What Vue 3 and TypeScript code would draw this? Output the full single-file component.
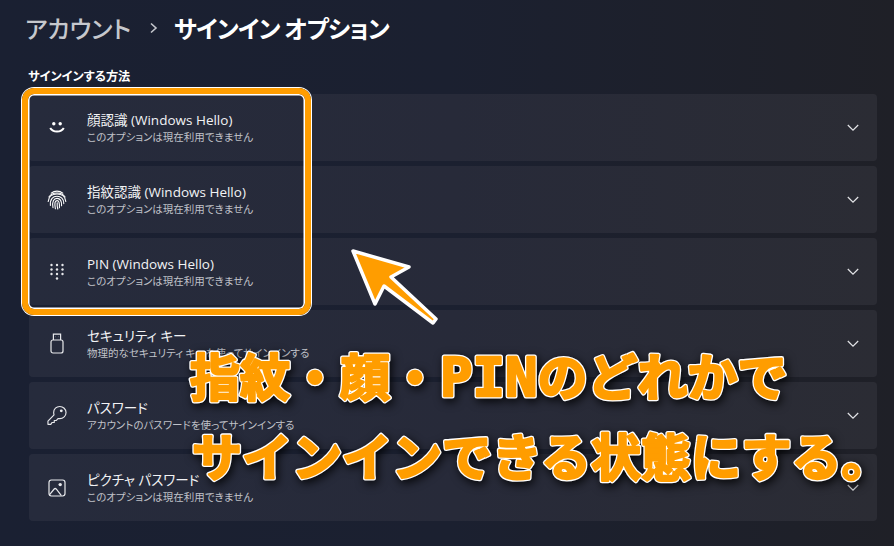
<script setup lang="ts">
interface Row {
  id: string;
  title: string;
  desc: string;
}

const unavailable = 'このオプションは現在利用できません';

const rows: Row[] = [
  { id: 'face', title: '顔認識 (Windows Hello)', desc: unavailable },
  { id: 'finger', title: '指紋認識 (Windows Hello)', desc: unavailable },
  { id: 'pin', title: 'PIN (Windows Hello)', desc: unavailable },
  { id: 'key', title: 'セキュリティ キー', desc: '物理的なセキュリティ キーを使ってサインインする' },
  { id: 'password', title: 'パスワード', desc: 'アカウントのパスワードを使ってサインインする' },
  { id: 'picture', title: 'ピクチャ パスワード', desc: unavailable },
];

const pinDots = [
  [1.5, 2], [7, 2], [12.5, 2],
  [1.5, 6.5], [7, 6.5], [12.5, 6.5],
  [1.5, 11], [7, 11], [12.5, 11],
  [7, 15.5],
];
</script>

<template>
  <div class="page">
    <header class="crumbs">
      <span class="parent">アカウント</span>
      <svg class="sep" width="10" height="12" viewBox="0 0 10 12">
        <path d="M2 1.5 L7 6 L2 10.5" fill="none" stroke="#c4c6cc" stroke-width="1.6" />
      </svg>
      <span class="current">サインイン オプション</span>
    </header>

    <h2 class="section">サインインする方法</h2>

    <div class="list">
      <div v-for="row in rows" :key="row.id" class="row">
        <div class="icon">
          <svg v-if="row.id === 'face'" width="20" height="20" viewBox="0 0 20 20" fill="none">
            <circle cx="6.8" cy="5.8" r="1.7" fill="#fff" />
            <circle cx="13.2" cy="5.8" r="1.7" fill="#fff" />
            <path d="M3.2 10 C6 14.8 14 14.8 16.8 10" stroke="#fff" stroke-width="2" />
          </svg>
          <svg v-else-if="row.id === 'finger'" width="20" height="20" viewBox="0 0 20 20" fill="none" stroke="#fff" stroke-width="1.1" stroke-linecap="round">
            <path d="M4.2 3.2 C7.6 0.4 12.4 0.4 15.8 3.2" />
            <path d="M1.9 7 C5.2 1.6 14.8 1.6 18.1 7" />
            <path d="M1.2 11.5 C1.6 6.4 5.6 4 10 4 C14.4 4 18.4 6.4 18.8 11.5" />
            <path d="M3.4 15.4 C2.8 8.8 6.2 6.2 10 6.2 C13.8 6.2 17 8.8 16.8 13.6" />
            <path d="M6 17.6 C4.8 11.4 6.8 8.4 10 8.4 C13 8.4 14.8 10.6 14.6 15.8" />
            <path d="M8.4 18.8 C7.2 13.4 8 10.6 10 10.6 C12 10.6 12.6 12.8 12.4 17.8" />
            <path d="M10.2 12.8 C10 15 10.2 17 10.8 19" />
          </svg>
          <svg v-else-if="row.id === 'pin'" width="14" height="18" viewBox="0 0 14 18">
            <circle v-for="(d, i) in pinDots" :key="i" :cx="d[0]" :cy="d[1]" r="1.2" fill="#e8e9ec" />
          </svg>
          <svg v-else-if="row.id === 'key'" width="14" height="21" viewBox="0 0 14 21" fill="none" stroke="#e8e9ec" stroke-width="1.2">
            <rect x="1" y="7" width="12" height="13" rx="2" />
            <path d="M3.4 7 V1.2 H10.6 V7" />
            <path d="M5.4 3.6 H5.6 M8.4 3.6 H8.6" />
          </svg>
          <svg v-else-if="row.id === 'password'" width="21" height="21" viewBox="0 0 21 21" fill="none" stroke="#e8e9ec" stroke-width="1.2" stroke-linejoin="round">
            <path d="M13.4 1 C17 1 20 3.8 20 7.4 C20 11 17 13.8 13.4 13.8 L11.8 13.6 L9.6 15.8 H7.6 V17.8 H5.4 L4 19.8 H1 V16.4 L7.4 9.8 C7.1 9 7 8.2 7 7.4 C7 3.8 9.8 1 13.4 1 Z" />
            <circle cx="15" cy="5.6" r="1.5" fill="#e8e9ec" stroke="none" />
          </svg>
          <svg v-else width="18" height="18" viewBox="0 0 18 18" fill="none" stroke="#e8e9ec" stroke-width="1.2">
            <rect x="1" y="1" width="16" height="16" rx="2.4" />
            <path d="M1.4 15.8 L6.2 10 C6.8 9.4 7.6 9.4 8.2 10 L13.4 16.6" />
            <circle cx="12.2" cy="5.6" r="1.7" fill="#e8e9ec" stroke="none" />
          </svg>
        </div>
        <div class="text">
          <div class="title">{{ row.title }}</div>
          <div class="desc">{{ row.desc }}</div>
        </div>
        <svg class="chevron" width="12" height="8" viewBox="0 0 12 8">
          <path d="M0.8 1 L6 6.2 L11.2 1" fill="none" stroke="#e4e5e8" stroke-width="1.2" />
        </svg>
      </div>
    </div>

    <!-- annotation layer -->
    <div class="highlight"></div>
    <svg class="arrow" width="92" height="80" viewBox="0 0 92 80">
      <path
        d="M4 4 L60 20 L42 30 L87 72 L84 76 L35 39 L26 57 Z"
        fill="#ff9d00"
        stroke="#fff"
        stroke-width="3.5"
        stroke-linejoin="round"
      />
    </svg>
    <svg class="caption" width="894" height="546" viewBox="0 0 894 546">
      <!-- white rim is the same text drawn again through use -->
      <use href="#cap1" class="rim" />
      <use href="#cap2" class="rim" />
      <g class="face">
        <text id="cap1" x="190" y="396">指紋・顔・<tspan class="pin">PIN</tspan>のどれかで</text>
        <text id="cap2" x="192" y="476">サインインできる状態にする。</text>
      </g>
    </svg>
  </div>
</template>

<style scoped>
.page {
  position: relative;
  width: 894px;
  height: 546px;
  overflow: hidden;
  box-sizing: border-box;
  padding: 10px 17px 0 29px;
  background: linear-gradient(90deg, #1a2032 0%, #1b2030 50%, #1f2027 100%);
  font-family: "Noto Sans CJK JP", "Open Sans", sans-serif;
  font-feature-settings: "palt";
  color: #fff;
}

.crumbs {
  display: flex;
  align-items: center;
  height: 35px;
  margin-left: -4px;
  font-size: 24px;
  font-weight: 500;
}

.parent {
  color: #c6c8cd;
}

.sep {
  margin: 0 15px 0 18px;
}

.current {
  font-weight: 700;
  letter-spacing: -0.8px;
}

.section {
  margin: 22px 0 9px -1px;
  font-size: 12.2px;
  line-height: 18px;
  font-weight: 700;
}

.list {
  display: flex;
  flex-direction: column;
  gap: 5px;
}

.row {
  display: flex;
  align-items: center;
  height: 67px;
  border-radius: 4px;
  background: linear-gradient(90deg, #262b3c 0%, #272a39 50%, #2b2c34 100%);
}

.icon {
  display: flex;
  align-items: center;
  justify-content: center;
  width: 20px;
  height: 24px;
  margin: 0 20px 0 18px;
}

.text {
  flex: 1;
  min-width: 0;
  margin-top: 1px;
}

.title {
  font-family: "Open Sans", "Noto Sans CJK JP", sans-serif;
  font-size: 13.5px;
  line-height: 18px;
  color: #f2f3f5;
}

.desc {
  font-size: 10.5px;
  line-height: 16px;
  color: #c0c2c9;
}

.chevron {
  margin-right: 18px;
}

.highlight {
  position: absolute;
  left: 22px;
  top: 88px;
  width: 289px;
  height: 227px;
  box-sizing: border-box;
  border: 6px solid #ff9d00;
  border-radius: 12px;
  box-shadow: 0 0 0 1px #fff, inset 0 0 0 1.5px #fff;
}

.arrow {
  position: absolute;
  left: 349px;
  top: 247px;
}

.caption {
  position: absolute;
  left: 0;
  top: 0;
  font-weight: 700;
  font-size: 50px;
  font-feature-settings: normal;
  fill: #ff9d00;
  stroke-linejoin: round;
  filter: drop-shadow(2px 3px 5px rgba(0, 0, 0, 0.85));
}

.rim {
  stroke: #fff;
  stroke-width: 5px;
}

.face {
  stroke: #ff9d00;
  stroke-width: 2.4px;
}

.pin {
  font-family: "DejaVu Sans Mono", monospace;
  font-weight: 700;
  font-size: 54px;
}
</style>
